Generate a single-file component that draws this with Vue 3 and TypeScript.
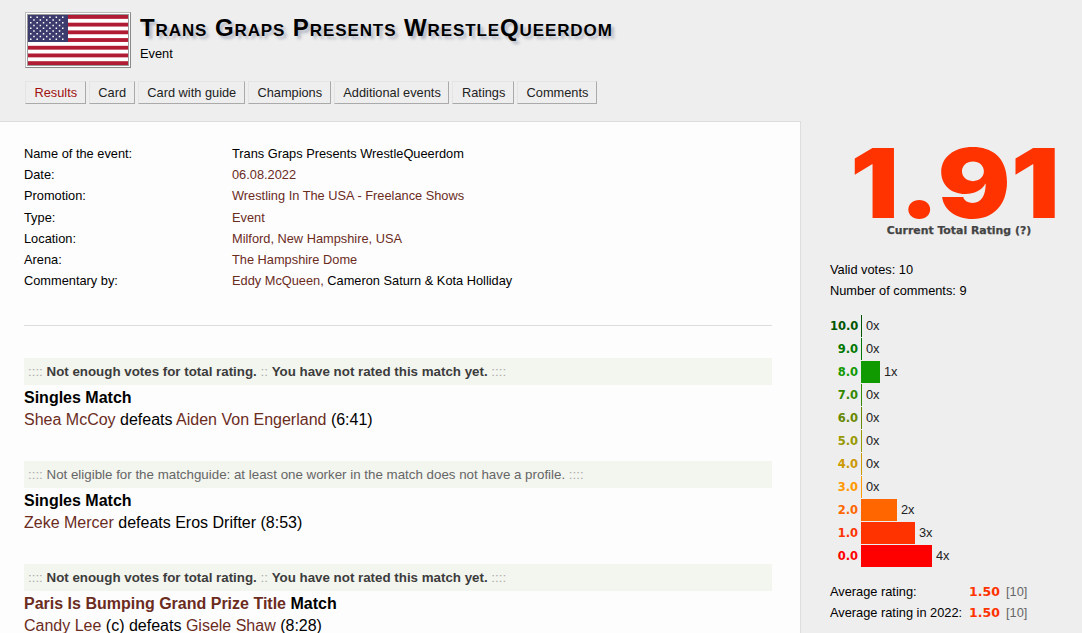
<template>
  <div class="page">
    <header class="head">
      <div class="title-row">
        <div class="flag-box">
          <svg class="flag" viewBox="0 0 100 50" preserveAspectRatio="none" xmlns="http://www.w3.org/2000/svg">
            <rect width="100" height="50" fill="#fff" />
            <rect v-for="n in 7" :key="n" x="0" :y="(n - 1) * 7.7" width="100" height="3.85" fill="#b01c34" />
            <rect width="40" height="27" fill="#3c3b6e" />
            <g fill="#fff">
              <rect v-for="(s, i) in stars" :key="i" :x="s[0]" :y="s[1]" width="1.5" height="1.5" />
            </g>
          </svg>
        </div>
        <div class="title-text">
          <h1>Trans Graps Presents WrestleQueerdom</h1>
          <div class="sub">Event</div>
        </div>
      </div>
      <nav class="tabs">
        <a v-for="t in tabs" :key="t" class="tab" :class="{ active: t === 'Results' }">{{ t }}</a>
      </nav>
    </header>

    <div class="body">
      <main class="content">
        <div class="info">
          <div v-for="row in info" :key="row.label" class="info-row">
            <span class="info-label">{{ row.label }}</span>
            <span class="info-value" :class="{ link: row.link }">{{ row.value }}<span v-if="row.rest" class="plain">{{ row.rest }}</span></span>
          </div>
        </div>
        <hr class="rule" />

        <section class="match">
          <div class="bar"><i>::::</i> <b>Not enough votes for total rating.</b> <i>::</i> <b>You have not rated this match yet.</b> <i>::::</i></div>
          <div class="m-type">Singles Match</div>
          <div class="m-line"><a>Shea McCoy</a> defeats <a>Aiden Von Engerland</a> (6:41)</div>
        </section>
        <section class="match">
          <div class="bar grey"><i>::::</i> Not eligible for the matchguide: at least one worker in the match does not have a profile. <i>::::</i></div>
          <div class="m-type">Singles Match</div>
          <div class="m-line"><a>Zeke Mercer</a> defeats Eros Drifter (8:53)</div>
        </section>
        <section class="match">
          <div class="bar"><i>::::</i> <b>Not enough votes for total rating.</b> <i>::</i> <b>You have not rated this match yet.</b> <i>::::</i></div>
          <div class="m-type"><a>Paris Is Bumping Grand Prize Title</a> Match</div>
          <div class="m-line"><a>Candy Lee</a> (c) defeats <a>Gisele Shaw</a> (8:28)</div>
        </section>
      </main>

      <aside class="side">
        <div class="score-wrap"><span class="score">1.91</span></div>
        <div class="score-cap">Current Total Rating (?)</div>
        <div class="votes">
          <div>Valid votes: 10</div>
          <div>Number of comments: 9</div>
        </div>
        <div class="chart">
          <div v-for="b in bars" :key="b.label" class="chart-row">
            <span class="chart-label" :style="{ color: b.color }">{{ b.label }}</span>
            <span class="chart-bar" :style="{ width: b.width + 'px', background: b.color }"></span>
            <span class="chart-count">{{ b.count }}x</span>
          </div>
        </div>
        <div class="avg">
          <div class="avg-row"><span class="avg-label">Average rating:</span><b>1.50</b><span class="avg-n">[10]</span></div>
          <div class="avg-row"><span class="avg-label">Average rating in 2022:</span><b>1.50</b><span class="avg-n">[10]</span></div>
        </div>
      </aside>
    </div>
  </div>
</template>

<script setup lang="ts">
const tabs = ['Results', 'Card', 'Card with guide', 'Champions', 'Additional events', 'Ratings', 'Comments']

interface InfoRow { label: string; value: string; link?: boolean; rest?: string }

const info: InfoRow[] = [
  { label: 'Name of the event:', value: 'Trans Graps Presents WrestleQueerdom' },
  { label: 'Date:', value: '06.08.2022', link: true },
  { label: 'Promotion:', value: 'Wrestling In The USA - Freelance Shows', link: true },
  { label: 'Type:', value: 'Event', link: true },
  { label: 'Location:', value: 'Milford, New Hampshire, USA', link: true },
  { label: 'Arena:', value: 'The Hampshire Dome', link: true },
  { label: 'Commentary by:', value: 'Eddy McQueen,', link: true, rest: ' Cameron Saturn & Kota Holliday' },
]

// sterne im blauen feld, versetzte reihen
const stars: number[][] = []
for (let r = 0; r < 9; r++) {
  const n = r % 2 === 0 ? 6 : 5
  for (let c = 0; c < n; c++) {
    stars.push([(r % 2 === 0 ? 2 : 5.2) + c * 6.4, 1.5 + r * 2.75])
  }
}

const bars = [
  { label: '10.0', count: 0, width: 1, color: '#005500' },
  { label: '9.0', count: 0, width: 1, color: '#007700' },
  { label: '8.0', count: 1, width: 19, color: '#119900' },
  { label: '7.0', count: 0, width: 1, color: '#338800' },
  { label: '6.0', count: 0, width: 1, color: '#668800' },
  { label: '5.0', count: 0, width: 1, color: '#999900' },
  { label: '4.0', count: 0, width: 1, color: '#cc9900' },
  { label: '3.0', count: 0, width: 1, color: '#ff9900' },
  { label: '2.0', count: 2, width: 36, color: '#ff6600' },
  { label: '1.0', count: 3, width: 54, color: '#ff3300' },
  { label: '0.0', count: 4, width: 71, color: '#ff0000' },
]
</script>

<style>
html, body {
  margin: 0;
  background: #eeeeee;
  overflow: hidden;
}
</style>

<style scoped>
.page {
  width: 1082px;
  height: 633px;
  overflow: hidden;
  background: #eeeeee;
  font-family: "Liberation Sans", Arial, sans-serif;
  font-size: 12.8px;
  color: #000;
}
.head {
  padding: 12px 0 0 25px;
  height: 121px;
  box-sizing: border-box;
}
.title-row {
  display: flex;
  gap: 9px;
}
.flag-box {
  width: 106px;
  height: 56px;
  box-sizing: border-box;
  border: 1px solid;
  border-color: #bbb #888 #888 #bbb;
  background: #fff;
  padding: 2px;
}
.flag {
  display: block;
  width: 100%;
  height: 100%;
  outline: 1px solid #999;
}
h1 {
  margin: 3px 0 0;
  font-size: 24px;
  line-height: 26px;
  font-weight: 700;
  font-variant: small-caps;
  letter-spacing: 0.9px;
  text-shadow: 3px 3px 3px #b4b8c4;
}
.sub {
  margin-top: 5px;
  line-height: 16px;
}
.tabs {
  display: flex;
  gap: 3.2px;
  margin-top: 13px;
}
.tab {
  display: block;
  height: 23px;
  line-height: 22px;
  box-sizing: border-box;
  padding: 0 7.5px 0 8.5px;
  background: #eee;
  border: 1px solid;
  border-color: #e4e4e4 #aaa #aaa #e4e4e4;
  color: #222;
}
.tab.active {
  color: #a01010;
}
.body {
  display: flex;
  align-items: flex-start;
}
.content {
  width: 801px;
  height: 512px;
  box-sizing: border-box;
  background: #fdfdfd;
  border-top: 1px solid #ddd;
  border-right: 1px solid #ddd;
  padding: 21px 28px 0 24px;
  flex: none;
}
.info-row {
  display: flex;
  height: 21.2px;
  line-height: 21px;
}
.info-label {
  width: 208px;
  flex: none;
}
.link, .match a {
  color: #6b2c1e;
}
.plain {
  color: #000;
}
.rule {
  border: 0;
  border-top: 1px solid #ddd;
  margin: 34px 0 32px;
}
.match {
  height: 103px;
}
.bar {
  background: #f3f5ef;
  height: 27px;
  line-height: 27px;
  padding-left: 4px;
  font-size: 13.33px;
  color: #3c3c3c;
}
.bar i {
  font-style: normal;
  color: #aaa;
}
.bar.grey {
  color: #666;
}
.m-type {
  margin-top: 2px;
  font-size: 16px;
  font-weight: 700;
  line-height: 22px;
}
.m-line {
  font-size: 16px;
  line-height: 22px;
}
.side {
  flex: 1;
  padding: 0 0 0 29px;
}
.score-wrap {
  width: 258px;
  margin: 22px 0 0 -4px;
  height: 81px;
  text-align: center;
}
.score {
  display: inline-block;
  color: #ff3300;
  font-family: Inter, Roboto, sans-serif;
  font-size: 96px;
  font-weight: 900;
  line-height: 80px;
  transform: scaleX(1.13);
}
.score-cap {
  width: 258px;
  text-align: center;
  font-family: "DejaVu Sans", sans-serif;
  font-size: 10.9px;
  font-weight: 700;
  color: #444;
  line-height: 14px;
  -webkit-text-stroke: 0.25px #444;
}
.votes {
  margin-top: 21px;
  line-height: 21px;
}
.chart {
  margin-top: 13px;
}
.chart-row {
  display: flex;
  align-items: center;
  height: 23px;
}
.chart-label {
  width: 28px;
  margin-right: 3px;
  text-align: right;
  font-family: "DejaVu Sans", sans-serif;
  font-weight: 700;
  font-size: 11.5px;
}
.chart-bar {
  display: block;
  height: 22px;
}
.chart-count {
  margin-left: 4px;
  color: #222;
}
.avg {
  margin-top: 14px;
}
.avg-row {
  display: flex;
  line-height: 21px;
}
.avg-label {
  width: 139px;
}
.avg-row b {
  color: #ff3300;
  font-family: "DejaVu Sans", sans-serif;
  font-size: 12.5px;
  width: 37px;
}
.avg-n {
  color: #666;
}
</style>
